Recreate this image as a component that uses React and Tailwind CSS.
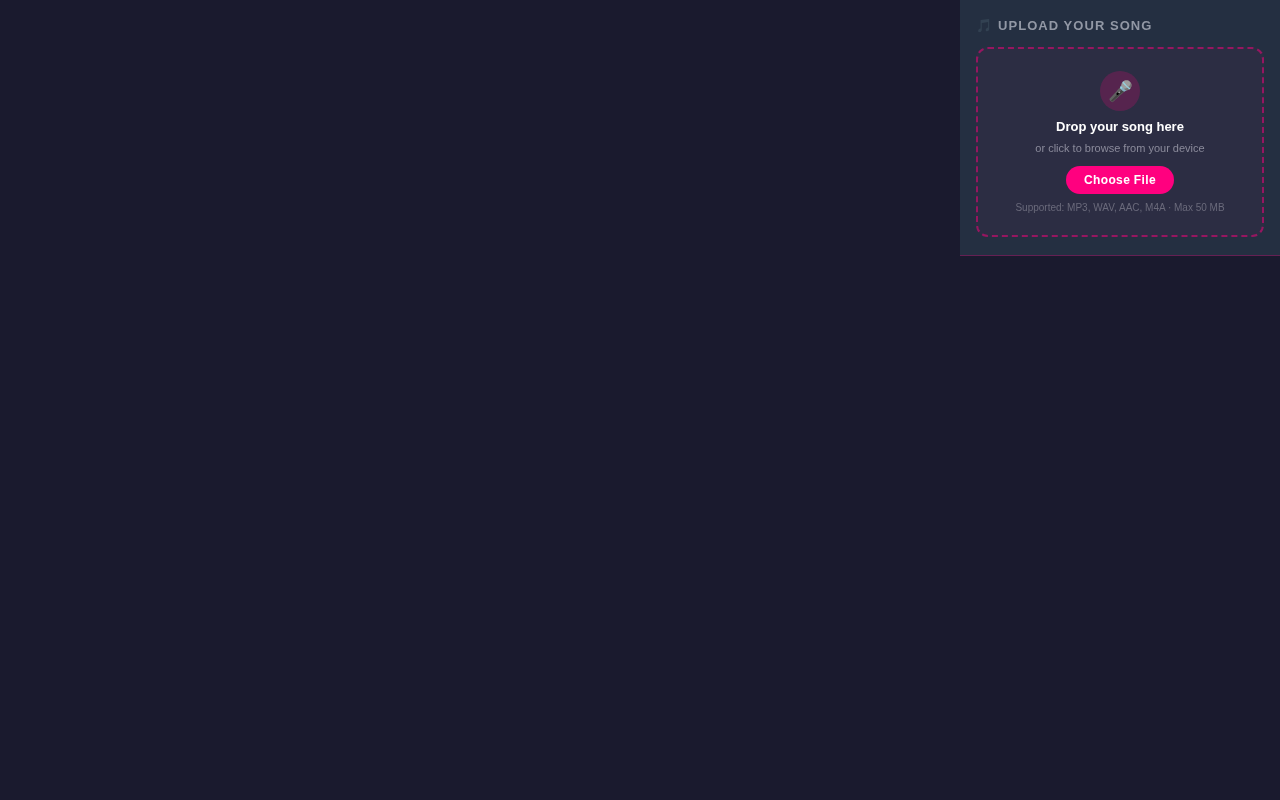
export default function App() {
  return (
    <div className="min-h-screen bg-[#1a1a2e] flex justify-end items-start font-['Liberation_Sans',Arial,sans-serif]">
      <div className="w-[320px] h-[256px] p-4 bg-[#263244e6] border-b border-[#ff007f4d] backdrop-blur-sm">
        <h2 className="flex items-center gap-[5px] h-[18px] mt-px mb-3 text-[13px] font-bold tracking-[1.04px] text-[#9298a5] uppercase">
          <span className="opacity-30">🎵</span>
          Upload your song
        </h2>
        <div className="h-[190px] flex flex-col items-center pt-[22px] rounded-xl border-2 border-dashed border-[#ff007f80] bg-[#ff007f0a]">
          <div className="w-10 h-10 rounded-full bg-[#ff007f33] flex items-center justify-center text-[20px]">🎤</div>
          <p className="mt-2 text-[13px] leading-4 font-bold text-white">Drop your song here</p>
          <p className="mt-[6px] text-[11px] leading-[15px] text-[#8b8b9b]">or click to browse from your device</p>
          <button className="mt-[10px] h-7 px-[18px] rounded-full bg-[#ff007f] text-white text-xs font-bold tracking-[0.36px]">Choose File</button>
          <p className="mt-[7px] text-[10px] leading-[13px] text-[#6a6a7b]">Supported: MP3, WAV, AAC, M4A · Max 50 MB</p>
        </div>
      </div>
    </div>
  );
}
